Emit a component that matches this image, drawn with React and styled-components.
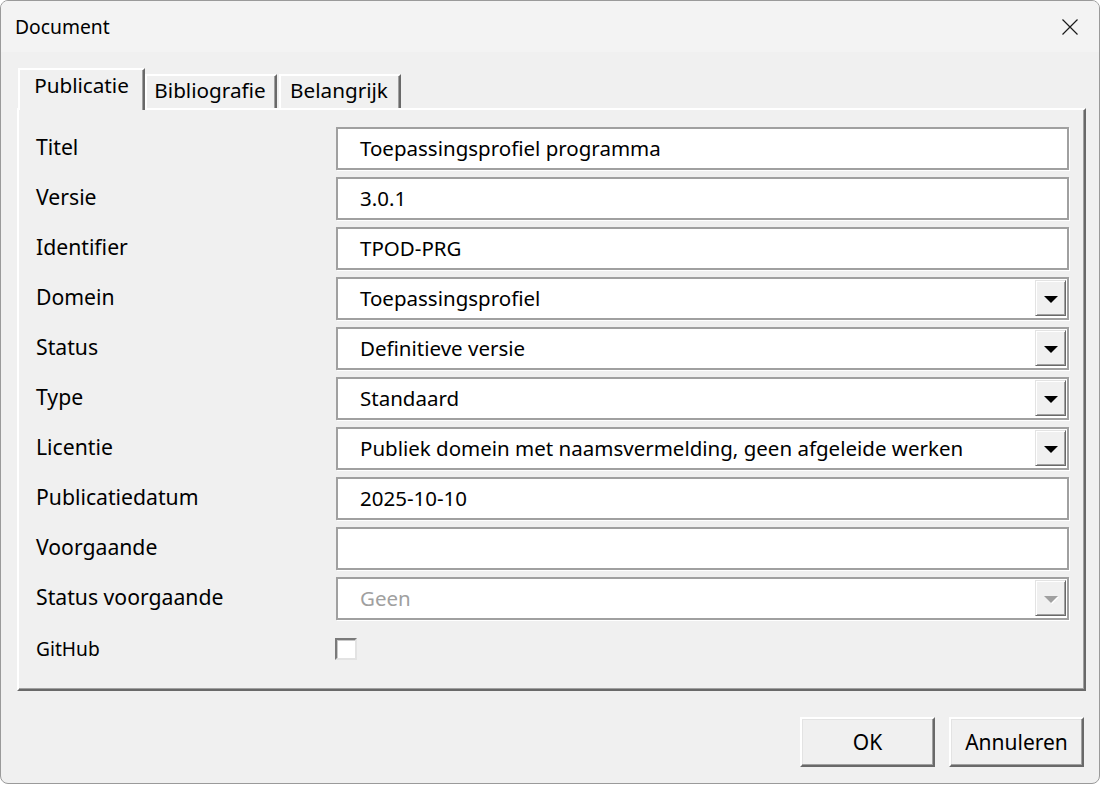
import React from "react";
import styled, { createGlobalStyle, css } from "styled-components";

const GlobalStyle = createGlobalStyle`
  html, body { margin: 0; padding: 0; background: #ffffff; }
  body { font-family: "Noto Sans", "Open Sans", Arial, sans-serif; color: #000; }
  * { box-sizing: border-box; }
`;

const Window = styled.div`
  width: 1100px;
  height: 784px;
  border: 1px solid #9a9a9a;
  border-radius: 8px;
  background: #f0f0f0;
  display: flex;
  flex-direction: column;
  overflow: hidden;
`;

const TitleBar = styled.div`
  height: 51px;
  background: #f3f3f3;
  display: flex;
  align-items: center;
  justify-content: space-between;
  padding: 0 20px 0 14px;
  flex-shrink: 0;
`;

const Title = styled.span`
  font-size: 19.3px;
`;

const CloseButton = styled.button`
  border: 0;
  background: transparent;
  padding: 0;
  width: 18px;
  height: 18px;
  display: flex;
  align-items: center;
  justify-content: center;
`;

const Body = styled.div`
  flex: 1;
  display: flex;
  flex-direction: column;
  padding: 16px 13px 0 16px;
`;

const TabStrip = styled.div`
  display: flex;
  align-items: flex-end;
  height: 40px;
  padding-left: 1px;
  position: relative;
  z-index: 1;
`;

const Tab = styled.div`
  display: flex;
  align-items: center;
  justify-content: center;
  font-size: 20.7px;
  white-space: nowrap;
  background: #f0f0f0;
  border-top: 2px solid #ffffff;
  border-left: 2px solid #ffffff;
  border-right: 2px solid #696969;
  box-shadow: inset -1px 0 0 #a0a0a0;
  ${(p) =>
    p.$active
      ? css`
          height: 42px;
          margin-bottom: -2px;
          padding: 0 10px 10px 10px;
          width: 127px;
        `
      : css`
          height: 34px;
          padding: 0 8px 5px 6px;
          margin-left: ${p.$first ? "0" : "2px"};
          width: ${p.$w}px;
        `}
`;

const Panel = styled.div`
  height: 583px;
  border-top: 2px solid #ffffff;
  border-left: 2px solid #ffffff;
  border-right: 2px solid #696969;
  border-bottom: 2px solid #696969;
  box-shadow: inset -1px -1px 0 #a0a0a0;
  padding: 17px 15px 0 17px;
  display: flex;
  flex-direction: column;
`;

const FormGrid = styled.div`
  display: grid;
  grid-template-columns: 300px 1fr;
  grid-auto-rows: 43px;
  row-gap: 7px;
  align-items: center;
`;

const Label = styled.div`
  font-size: ${(p) => (p.$small ? "19.2px" : "21.2px")};
  line-height: 1;
  padding-bottom: ${(p) => (p.$small ? "0" : "3px")};
  white-space: nowrap;
`;

const Field = styled.div`
  height: 43px;
  border: 2px solid #a0a0a0;
  background: #ffffff;
  display: flex;
  align-items: stretch;
  box-shadow: 1px 1px 0 #ffffff;
`;

const FieldText = styled.div`
  flex: 1;
  display: flex;
  align-items: center;
  padding: 0 0 2px 22px;
  font-size: 20.5px;
  color: ${(p) => (p.$disabled ? "#a0a0a0" : "#000")};
  white-space: nowrap;
  overflow: hidden;
`;

const DropButton = styled.div`
  width: 31px;
  margin: 1px 1px 2px 0;
  background: #f0f0f0;
  border-top: 1px solid #e3e3e3;
  border-left: 1px solid #e3e3e3;
  border-right: 1px solid #696969;
  border-bottom: 1px solid #696969;
  box-shadow: inset 1px 1px 0 #ffffff, inset -1px -1px 0 #a0a0a0;
  display: flex;
  align-items: center;
  justify-content: center;
`;

const Arrow = styled.span`
  width: 0;
  height: 0;
  border-left: 7px solid transparent;
  border-right: 7px solid transparent;
  border-top: 7px solid ${(p) => (p.$disabled ? "#a0a0a0" : "#000")};
  margin-top: 2px;
  filter: ${(p) => (p.$disabled ? "drop-shadow(1px 1px 0 #ffffff)" : "none")};
`;

const CheckRow = styled.div`
  display: grid;
  grid-template-columns: 300px 1fr;
  align-items: center;
  margin-top: 18px;
  height: 22px;
`;

const CheckBox = styled.span`
  width: 22px;
  height: 22px;
  margin-left: -1px;
  background: #ffffff;
  border-top: 2px solid #7a7a7a;
  border-left: 2px solid #7a7a7a;
  border-right: 2px solid #e3e3e3;
  border-bottom: 2px solid #e3e3e3;
  box-shadow: inset 1px 1px 0 #c8c8c8;
`;

const Footer = styled.div`
  display: flex;
  justify-content: flex-end;
  gap: 14px;
  padding-top: 26px;
  padding-right: 2px;
`;

const Button = styled.button`
  width: 135px;
  height: 50px;
  font-family: inherit;
  font-size: 21px;
  color: #000;
  background: #f0f0f0;
  border-top: 2px solid #ffffff;
  border-left: 2px solid #ffffff;
  border-right: 2px solid #696969;
  border-bottom: 2px solid #696969;
  box-shadow: inset -1px -1px 0 #a0a0a0, inset 1px 1px 0 #e3e3e3;
  padding: 0;
`;

const rows = [
  { label: "Titel", value: "Toepassingsprofiel programma" },
  { label: "Versie", value: "3.0.1" },
  { label: "Identifier", value: "TPOD-PRG" },
  { label: "Domein", value: "Toepassingsprofiel", select: true },
  { label: "Status", value: "Definitieve versie", select: true },
  { label: "Type", value: "Standaard", select: true },
  {
    label: "Licentie",
    value: "Publiek domein met naamsvermelding, geen afgeleide werken",
    select: true,
  },
  { label: "Publicatiedatum", value: "2025-10-10" },
  { label: "Voorgaande", value: "" },
  { label: "Status voorgaande", value: "Geen", select: true, disabled: true },
];

export default function App() {
  return (
    <>
      <GlobalStyle />
      <Window>
        <TitleBar>
          <Title>Document</Title>
          <CloseButton aria-label="Sluiten">
            <svg width="16" height="16" viewBox="0 0 16 16">
              <path d="M0.5 0.5 L15.5 15.5 M15.5 0.5 L0.5 15.5" stroke="#1a1a1a" strokeWidth="1.2" fill="none" />
            </svg>
          </CloseButton>
        </TitleBar>
        <Body>
          <TabStrip>
            <Tab $active>Publicatie</Tab>
            <Tab $first $w={132}>Bibliografie</Tab>
            <Tab $w={122}>Belangrijk</Tab>
          </TabStrip>
          <Panel>
            <FormGrid>
              {rows.map((r) => (
                <React.Fragment key={r.label}>
                  <Label>{r.label}</Label>
                  <Field>
                    <FieldText $disabled={r.disabled}>{r.value}</FieldText>
                    {r.select && (
                      <DropButton>
                        <Arrow $disabled={r.disabled} />
                      </DropButton>
                    )}
                  </Field>
                </React.Fragment>
              ))}
            </FormGrid>
            <CheckRow>
              <Label $small>GitHub</Label>
              <CheckBox />
            </CheckRow>
          </Panel>
          <Footer>
            <Button>OK</Button>
            <Button>Annuleren</Button>
          </Footer>
        </Body>
      </Window>
    </>
  );
}
